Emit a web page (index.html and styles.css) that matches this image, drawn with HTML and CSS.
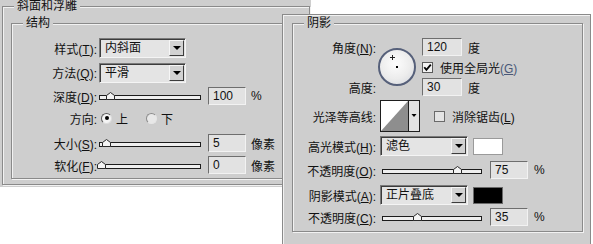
FILE: index.html
```html
<!DOCTYPE html>
<html lang="zh-CN">
<head>
  <meta charset="UTF-8" />
  <title>斜面和浮雕 / 阴影</title>
  <link rel="stylesheet" href="styles.css">
</head>
<body>
  <div class="stage">

    <!-- 斜面和浮雕 -->
    <div class="panel-left">
      <fieldset class="group outer">
        <legend>斜面和浮雕</legend>
        <fieldset class="group inner">
          <legend>结构</legend>
          <div class="form-left">
            <div class="row">
              <span class="lbl">样式(<u>T</u>):</span>
              <div class="select sel-left"><span class="val">内斜面</span><span class="btn"><i class="tri"></i></span></div>
            </div>
            <div class="row">
              <span class="lbl">方法(<u>Q</u>):</span>
              <div class="select sel-left"><span class="val">平滑</span><span class="btn"><i class="tri"></i></span></div>
            </div>
            <div class="row">
              <span class="lbl">深度(<u>D</u>):</span>
              <div class="slider sl-left"><div class="track"></div><svg class="thumb" style="left: 7px" width="9" height="8" viewBox="0 0 9 8"><polygon points="0.5,7.5 0.5,3.5 4.5,0.5 8.5,3.5 8.5,7.5" fill="#f4f4f4" stroke="#2a2a2a"/></svg></div>
              <div class="num">100</div>
              <span class="unit">%</span>
            </div>
            <div class="row">
              <span class="lbl">方向:</span>
              <span class="radio on"></span><span class="opt">上</span>
              <span class="radio off"></span><span class="opt">下</span>
            </div>
            <div class="row">
              <span class="lbl">大小(<u>S</u>):</span>
              <div class="slider sl-left"><div class="track"></div><svg class="thumb" style="left: 3px" width="9" height="8" viewBox="0 0 9 8"><polygon points="0.5,7.5 0.5,3.5 4.5,0.5 8.5,3.5 8.5,7.5" fill="#f4f4f4" stroke="#2a2a2a"/></svg></div>
              <div class="num">5</div>
              <span class="unit">像素</span>
            </div>
            <div class="row">
              <span class="lbl">软化(<u>F</u>):</span>
              <div class="slider sl-left"><div class="track"></div><svg class="thumb" style="left: -2px" width="9" height="8" viewBox="0 0 9 8"><polygon points="0.5,7.5 0.5,3.5 4.5,0.5 8.5,3.5 8.5,7.5" fill="#f4f4f4" stroke="#2a2a2a"/></svg></div>
              <div class="num">0</div>
              <span class="unit">像素</span>
            </div>
          </div>
        </fieldset>
      </fieldset>
    </div>

    <!-- 阴影 -->
    <div class="panel-right">
      <fieldset class="group shadow-group">
        <legend>阴影</legend>
        <div class="form-right">
          <span class="lbl">角度(<u>N</u>):</span>
          <div class="dial-cell">
            <div class="dial"><i class="cross"></i><i class="dot"></i></div>
          </div>
          <div class="cell">
            <div class="num num-r">120</div><span class="unit">度</span>
          </div>

          <span></span>
          <div class="cell">
            <svg class="check" width="11" height="11" viewBox="0 0 11 11">
              <rect x="0.5" y="0.5" width="10" height="10" fill="#f2f2f2" stroke="#5a5a5a"/>
              <path d="M2.3 5.2 L4.4 7.8 L8.8 2.6" fill="none" stroke="#000" stroke-width="1.8"/>
            </svg>
            <span class="check-text">使用全局光<span class="hint">(<u>G</u>)</span></span>
          </div>

          <span class="lbl">高度:</span>
          <div class="cell">
            <div class="num num-r">30</div><span class="unit">度</span>
          </div>

          <span class="lbl">光泽等高线:</span>
          <div class="cell wide">
            <svg class="contour" width="40" height="32" viewBox="0 0 40 32">
              <rect x="0.5" y="0.5" width="39" height="31" fill="#fff" stroke="#1e1e1e"/>
              <polygon points="1,31 28,1 28,31" fill="#8e8e8e"/>
              <rect x="28" y="1" width="11" height="30" fill="#e2e2e2"/>
              <line x1="28.5" y1="1" x2="28.5" y2="31" stroke="#1e1e1e"/>
              <polygon points="31.5,14 36.5,14 34,17" fill="#000"/>
            </svg>
            <svg class="check check-aa" width="11" height="11" viewBox="0 0 11 11">
              <rect x="0.5" y="0.5" width="10" height="10" fill="#e4e4e4" stroke="#6a6a6a"/>
            </svg>
            <span class="check-text">消除锯齿(<u>L</u>)</span>
          </div>

          <span class="lbl">高光模式(<u>H</u>):</span>
          <div class="cell wide">
            <div class="select sel-right"><span class="val">滤色</span><span class="btn"><i class="tri"></i></span></div>
            <span class="swatch white"></span>
          </div>

          <span class="lbl">不透明度(<u>O</u>):</span>
          <div class="cell wide">
            <div class="slider sl-right"><div class="track"></div><svg class="thumb" style="left: 71px" width="9" height="8" viewBox="0 0 9 8"><polygon points="0.5,7.5 0.5,3.5 4.5,0.5 8.5,3.5 8.5,7.5" fill="#f4f4f4" stroke="#2a2a2a"/></svg></div>
            <div class="num">75</div>
            <span class="unit">%</span>
          </div>

          <span class="lbl">阴影模式(<u>A</u>):</span>
          <div class="cell wide">
            <div class="select sel-right"><span class="val">正片叠底</span><span class="btn"><i class="tri"></i></span></div>
            <span class="swatch black"></span>
          </div>

          <span class="lbl">不透明度(<u>C</u>):</span>
          <div class="cell wide">
            <div class="slider sl-right"><div class="track"></div><svg class="thumb" style="left: 31px" width="9" height="8" viewBox="0 0 9 8"><polygon points="0.5,7.5 0.5,3.5 4.5,0.5 8.5,3.5 8.5,7.5" fill="#f4f4f4" stroke="#2a2a2a"/></svg></div>
            <div class="num">35</div>
            <span class="unit">%</span>
          </div>
        </div>
      </fieldset>
    </div>

  </div>
</body>
</html>
```

FILE: styles.css
```css
* {
  box-sizing: border-box;
}

body {
  margin: 0;
  background: #fff;
  color: #111;
  font: 12px "Liberation Sans", "Noto Sans CJK SC", sans-serif;
}

u {
  text-decoration: underline;
  text-underline-offset: 1px;
}

.stage {
  position: relative;
  width: 593px;
  height: 244px;
  overflow: hidden;
  background: #fff;
}

/* group boxes */
.group {
  margin: 0;
  padding: 0;
  min-width: 0;
  border: 1px solid #8a8a8a;
  box-shadow: inset 1px 1px 0 #f2f2f2, 1px 1px 0 #f2f2f2;
}

.group > legend {
  margin-left: 11px;
  padding: 0 3px;
  line-height: 12px;
  background: #cecece;
}

/* left panel */
.panel-left {
  width: 311px;
  height: 187px;
  padding-left: 2px;
  background: #cecece;
}

.outer {
  width: 308px;
  height: 185px;
}

.outer > legend {
  line-height: 11px;
  padding-top: 1px;
}

.inner {
  margin: 5px 0 0 8px;
  width: 290px;
  height: 162px;
}

.form-left {
  display: grid;
  grid-template-rows: 24px 25px 22px 22px 28px 16px;
  padding-top: 7px;
}

.row {
  display: flex;
  align-items: center;
}

.lbl {
  text-align: right;
  white-space: nowrap;
}

.form-left .lbl {
  width: 85px;
  margin-right: 2px;
}

/* dropdowns */
.select {
  display: flex;
  height: 20px;
  background: #e4e4e4;
  border: 1px solid;
  border-color: #7a7a7a #f4f4f4 #f4f4f4 #7a7a7a;
  box-shadow: inset 1px 1px 0 #3c3c3c;
}

.sel-left {
  width: 87px;
}

.sel-right {
  width: 88px;
}

.select .val {
  flex: 1;
  padding: 1px 0 0 5px;
  line-height: 17px;
}

.select .btn {
  display: flex;
  align-items: center;
  justify-content: center;
  width: 15px;
  margin: 1px 1px 1px 0;
  background: #d2d2d2;
  border: 1px solid;
  border-color: #f6f6f6 #3c3c3c #3c3c3c #f6f6f6;
}

.tri {
  width: 0;
  height: 0;
  border-left: 4px solid transparent;
  border-right: 4px solid transparent;
  border-top: 4px solid #000;
}

/* sliders */
.slider {
  position: relative;
  height: 8px;
  display: flex;
  align-items: flex-end;
}

.sl-left {
  width: 102px;
  margin-left: 0;
}

.sl-right {
  width: 100px;
  margin-left: 2px;
}

.track {
  width: 100%;
  height: 5px;
  background: #efefef;
  border: 1px solid #1c1c1c;
}

.thumb {
  position: absolute;
  bottom: 0;
  display: block;
}

/* number fields */
.num {
  width: 38px;
  height: 18px;
  margin-left: 7px;
  padding-left: 4px;
  line-height: 16px;
  background: #e2e2e2;
  border: 1px solid;
  border-color: #6e6e6e #f2f2f2 #f2f2f2 #6e6e6e;
}

.unit {
  margin-left: 5px;
}

/* radios */
.radio {
  width: 11px;
  height: 11px;
  margin-left: 2px;
  border-radius: 50%;
  border: 1px solid;
  border-color: #5c5c5c #dcdcdc #dcdcdc #5c5c5c;
  background: #f4f4f4;
  display: flex;
  align-items: center;
  justify-content: center;
}

.radio.on::after {
  content: "";
  width: 4px;
  height: 4px;
  border-radius: 50%;
  background: #000;
}

.radio.off {
  margin-left: 18px;
  border-color: #8c8c8c #e6e6e6 #e6e6e6 #8c8c8c;
  background: #e8e8e8;
}

.opt {
  margin-left: 4px;
}

/* right panel */
.panel-right {
  position: absolute;
  left: 282px;
  top: 14px;
  width: 309px;
  height: 230px;
  padding: 2px 0 0 9px;
  background: #cecece;
  border: 1px solid #8a8a8a;
  border-bottom: 0;
  box-shadow: inset 1px 1px 0 #f2f2f2;
}

.shadow-group {
  width: 291px;
  height: 215px;
}

.form-right {
  display: grid;
  grid-template-columns: 83px 44px 1fr;
  grid-template-rows: 20px 20px 20px 38px 22px 26px 24px 20px;
  padding-top: 8px;
}

.form-right > .lbl {
  align-self: center;
}

.cell {
  display: flex;
  align-items: center;
  padding-left: 2px;
}

.cell.wide {
  grid-column: span 2;
  padding-left: 4px;
}

.cell .unit {
  margin-left: 6px;
}

.dial-cell {
  grid-row: span 3;
  display: flex;
  align-items: center;
  padding-left: 2px;
}

.dial {
  position: relative;
  width: 38px;
  height: 38px;
  border-radius: 50%;
  border: 2px solid #56607a;
  background: radial-gradient(circle at 45% 40%, #fdfdfd 0, #ececec 55%, #d2d5dc 100%);
}

.cross {
  position: absolute;
  left: 10px;
  top: 5px;
  width: 5px;
  height: 5px;
  background:
    linear-gradient(#222, #222) center / 5px 1px no-repeat,
    linear-gradient(#222, #222) center / 1px 5px no-repeat;
}

.dot {
  position: absolute;
  left: 16px;
  top: 16px;
  width: 2px;
  height: 2px;
  background: #000;
}

.check {
  display: block;
  flex: none;
}

.check-text {
  margin-left: 7px;
  white-space: nowrap;
}

.hint {
  color: #4a5878;
}

.contour {
  display: block;
  flex: none;
}

.check-aa {
  margin-left: 14px;
}

.swatch {
  width: 30px;
  height: 17px;
  margin-left: 5px;
  border: 1px solid #9a9a9a;
}

.swatch.white {
  background: #fff;
}

.swatch.black {
  background: #000;
  border-color: #6a6a6a;
}

.form-right .num {
  margin-left: 8px;
  width: 38px;
}

.form-right .cell > .num-r {
  margin-left: 0;
  width: 40px;
}
```
